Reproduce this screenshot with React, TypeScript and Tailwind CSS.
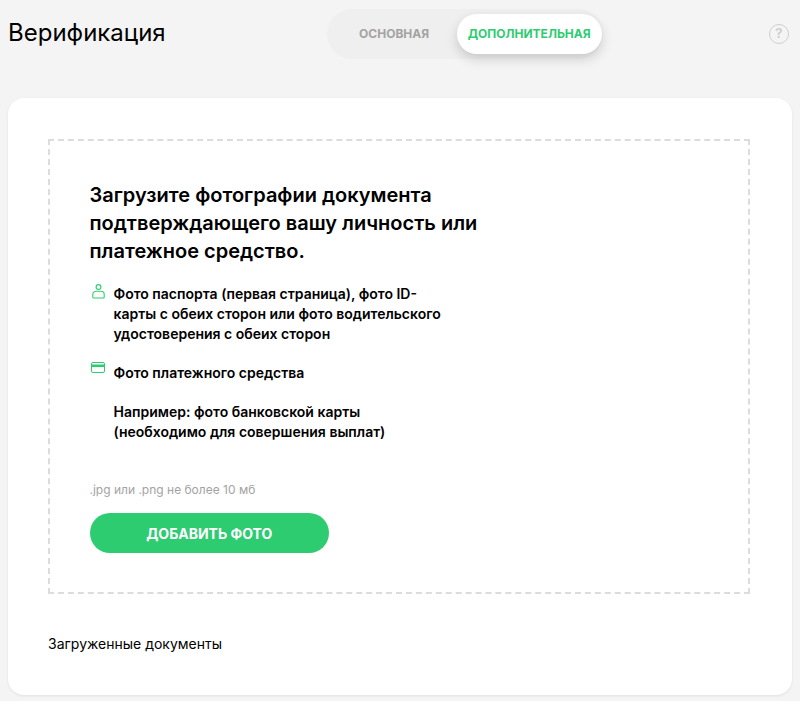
import React from 'react';

function UserIcon() {
  return (
    <svg width="13" height="15" viewBox="0 0 13 15" fill="none" stroke="#2ecc71" strokeWidth="1.1" className="shrink-0">
      <circle cx="6.5" cy="3" r="2.4" />
      <path d="M4 7.2h5a3.2 3.2 0 0 1 3.2 3.2v2.6a1 1 0 0 1-1 1H1.8a1 1 0 0 1-1-1v-2.6A3.2 3.2 0 0 1 4 7.2z" />
    </svg>
  );
}

function CardIcon() {
  return (
    <svg width="14" height="11" viewBox="0 0 14 11" fill="none" className="shrink-0">
      <rect x="0.5" y="0.5" width="13" height="10" rx="1.5" stroke="#2ecc71" />
      <rect x="1" y="2.5" width="12" height="2.5" fill="#2ecc71" />
    </svg>
  );
}

export default function App() {
  return (
    <div className="w-[800px] h-[701px] overflow-hidden bg-[#f4f4f4] font-['Inter',sans-serif] text-black">
      <header className="flex h-[98px] items-start justify-between pl-2 pr-[11px]">
        <h1 className="mt-[18px] text-[24px] leading-[30px] font-normal">Верификация</h1>
        <div className="ml-[161px] mt-[9px] flex h-[50px] w-[276px] items-center rounded-full bg-[#efefef]">
          <button className="w-[130px] pl-[5px] text-[12px] font-bold text-[#a3a3a3]">ОСНОВНАЯ</button>
          <button className="h-10 w-[145px] rounded-full bg-white text-[12px] font-bold text-[#2ecc71] shadow-[0_5px_12px_rgba(0,0,0,0.16)]">
            ДОПОЛНИТЕЛЬНАЯ
          </button>
        </div>
        <div className="ml-auto mt-6 flex size-5 items-center justify-center rounded-full border border-[#cfcfcf] text-[13px] font-bold text-[#cfcfcf]">
          ?
        </div>
      </header>
      <main className="ml-2 mr-2 h-[597px] rounded-[16px] bg-white px-10 pt-[41px] shadow-[0_1px_3px_rgba(0,0,0,0.08)]">
        <section className="h-[455px] w-[702px] border-2 border-dashed border-[#dcdcdc] pl-[39.5px] pt-[40px]">
          <h2 className="w-[420px] text-[20px] leading-[28px] font-semibold">
            Загрузите фотографии документа подтверждающего вашу личность или платежное средство.
          </h2>
          <div className="mt-[19px] flex gap-[10px]">
            <div className="ml-[2px] w-[14px]"><UserIcon /></div>
            <p className="-ml-[2px] w-[345px] text-[14px] leading-[20px] font-semibold">
              Фото паспорта (первая страница), фото ID-
              <br />
              карты с обеих сторон или фото водительского удостоверения с обеих сторон
            </p>
          </div>
          <div className="mt-[19px] flex gap-[10px]">
            <div className="ml-[1px] mt-[-1px]"><CardIcon /></div>
            <div className="-ml-[1px] text-[14px] leading-[20px] font-semibold">
              <p>Фото платежного средства</p>
              <p className="mt-[19px]">
                Например: фото банковской карты
                <br />
                (необходимо для совершения выплат)
              </p>
            </div>
          </div>
          <p className="mt-[40px] text-[12px] leading-4 text-[#a3a3a3]">.jpg или .png не более 10 мб</p>
          <button className="mt-[15px] h-10 w-[239.5px] rounded-full bg-[#2ecc71] text-[14px] font-bold text-white">
            ДОБАВИТЬ ФОТО
          </button>
        </section>
        <h3 className="mt-[40px] text-[14px] leading-5 font-normal">Загруженные документы</h3>
      </main>
    </div>
  );
}
